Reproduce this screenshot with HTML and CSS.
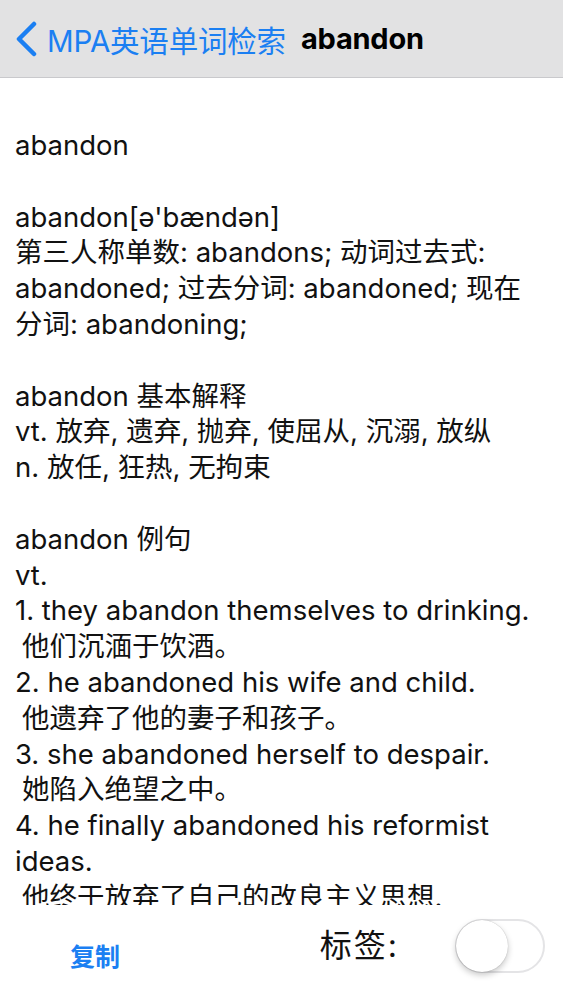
FILE: index.html
```html
<!DOCTYPE html>
<html lang="zh-CN">
<head>
    <meta charset="UTF-8">
    <title>abandon - MPA英语单词检索</title>
    <link rel="stylesheet" href="styles.css">
</head>
<body>
    <header class="nav-bar">
        <a class="back" href="#">
            <svg class="chevron" viewBox="0 0 24 36" width="24" height="36">
                <path d="M20 3 L5 18 L20 33" fill="none" stroke="currentColor" stroke-width="4.5" stroke-linecap="round" stroke-linejoin="round"/>
            </svg>
            <span class="back-label">MPA英语单词检索</span>
        </a>
        <h1 class="nav-title">abandon</h1>
    </header>

    <main class="entry">
        <p>abandon</p>

        <p>abandon[ə'bændən]<br>
        第三人称单数: abandons; 动词过去式:<br>
        abandoned; 过去分词: abandoned; 现在<br>
        分词: abandoning;</p>

        <p>abandon 基本解释<br>
        vt. 放弃, 遗弃, 抛弃, 使屈从, 沉溺, 放纵<br>
        n. 放任, 狂热, 无拘束</p>

        <p>abandon 例句<br>
        vt.<br>
        1. they abandon themselves to drinking.<br>
        <span class="zh">他们沉湎于饮酒。</span><br>
        2. he abandoned his wife and child.<br>
        <span class="zh">他遗弃了他的妻子和孩子。</span><br>
        3. she abandoned herself to despair.<br>
        <span class="zh">她陷入绝望之中。</span><br>
        4. he finally abandoned his reformist<br>
        ideas.<br>
        <span class="zh">他终于放弃了自己的改良主义思想.</span></p>
    </main>

    <footer class="toolbar">
        <button class="copy">复制</button>
        <div class="tag-group">
            <span class="tag-label">标签:</span>
            <label class="switch">
                <input type="checkbox">
                <span class="knob"></span>
            </label>
        </div>
    </footer>
</body>
</html>
```

FILE: styles.css
```css
body {
    margin: 0;
    height: 1000px;
    display: flex;
    flex-direction: column;
    background: #fff;
    color: #111;
    font-family: Inter, "Noto Sans CJK SC", sans-serif;
    overflow: hidden;
}
.nav-bar {
    height: 77px;
    flex: none;
    display: flex;
    align-items: center;
    padding-left: 14px;
    background: #e2e2e3;
    border-bottom: 1px solid #c9c9cc;
}
.back {
    display: flex;
    align-items: center;
    color: #1b7ff2;
    text-decoration: none;
}
.chevron {
    display: block;
    margin-right: 9px;
}
.back-label {
    font-size: 29.5px;
    letter-spacing: -0.2px;
}
.nav-title {
    margin: 0 0 0 15px;
    font-size: 29px;
    font-weight: 700;
    color: #000;
    letter-spacing: -0.2px;
}
.entry {
    flex: 1;
    overflow: hidden;
    padding: 50px 12px 0 15px;
    font-size: 27.5px;
    line-height: 35.8px;
    white-space: nowrap;
}
.entry p {
    margin: 0 0 35.8px;
}
.zh {
    padding-left: 7px;
}
.toolbar {
    height: 95px;
    flex: none;
    display: flex;
    align-items: center;
    justify-content: space-between;
    padding: 0 18px 0 70px;
}
.copy {
    border: none;
    background: none;
    padding: 4px 0 0;
    font-family: inherit;
    font-size: 25px;
    font-weight: 700;
    color: #1b7ff2;
}
.tag-group {
    display: flex;
    align-items: center;
    gap: 56px;
    margin-top: -14px;
}
.tag-label {
    font-size: 32px;
    line-height: 1;
    letter-spacing: 2px;
}
.switch {
    position: relative;
    display: block;
    width: 90px;
    height: 54px;
}
.switch input {
    display: none;
}
.knob {
    display: block;
    width: 86px;
    height: 50px;
    border: 2px solid #e4e4e6;
    border-radius: 27px;
    background: #fff;
}
.knob::before {
    content: "";
    position: absolute;
    left: 1px;
    top: 1px;
    width: 52px;
    height: 52px;
    border-radius: 50%;
    background: #fff;
    box-shadow: 0 3px 6px rgba(0, 0, 0, 0.22), 0 0 1px rgba(0, 0, 0, 0.3);
}
```
